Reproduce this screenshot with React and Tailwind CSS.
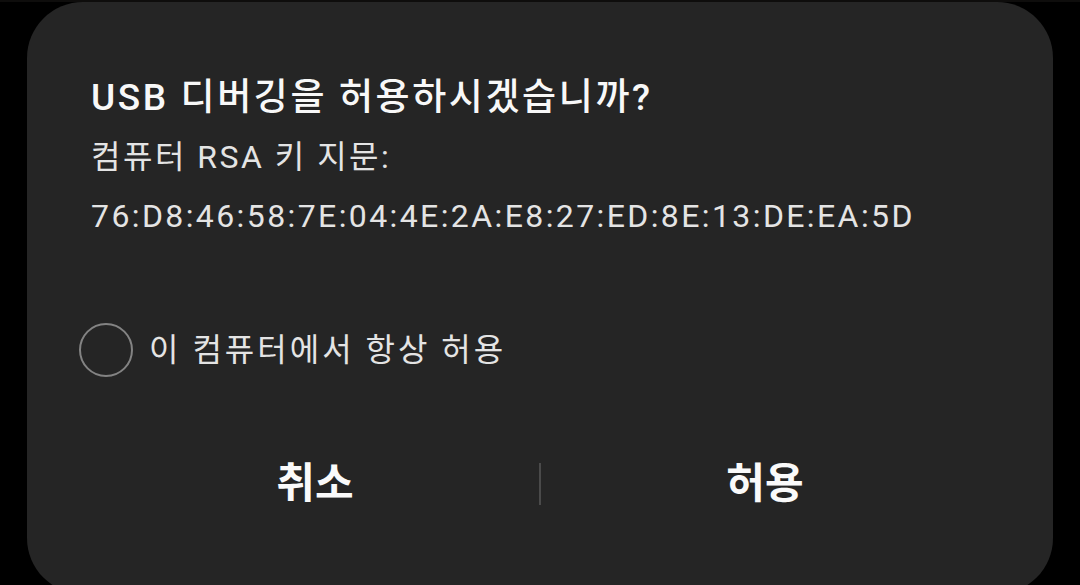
export default function App() {
  return (
    <div
      className="w-[1080px] h-[585px] overflow-hidden bg-black"
      style={{ fontFamily: "Roboto, 'Noto Sans CJK KR', sans-serif" }}
    >
      <div className="h-[2px] w-full bg-[#0e0d0c]" />
      <div className="ml-[27px] w-[1026px] h-[592px] rounded-[56px] bg-[#252525] px-[64px] pt-[74px]">
        <h1 className="text-[37px] leading-[44px] font-medium text-[#f8f8f8] tracking-[2.6px] whitespace-nowrap">
          USB 디버깅을 허용하시겠습니까?
        </h1>
        <div className="mt-[8px] leading-[59px] text-[#e4e4e4] whitespace-nowrap">
          <p className="text-[32px] tracking-[2.5px]">컴퓨터 RSA 키 지문:</p>
          <p className="text-[32px] tracking-[2.4px]">76:D8:46:58:7E:04:4E:2A:E8:27:ED:8E:13:DE:EA:5D</p>
        </div>

        <label className="mt-[77px] -ml-[12px] flex items-center gap-[16px]">
          <span className="w-[54px] h-[54px] rounded-full border-2 border-[#838383]" />
          <span className="text-[32px] tracking-[3px] text-[#e4e4e4] whitespace-nowrap">
            이 컴퓨터에서 항상 허용
          </span>
        </label>

        <div className="mt-[77px] h-[60px] flex items-center">
          <button className="flex-1 text-[42px] leading-[60px] font-bold text-[#fafafa]">취소</button>
          <span className="w-[2px] h-[42px] bg-[#4a4a4a]" />
          <button className="flex-1 text-[42px] leading-[60px] font-bold text-[#fafafa]">허용</button>
        </div>
      </div>
    </div>
  );
}
